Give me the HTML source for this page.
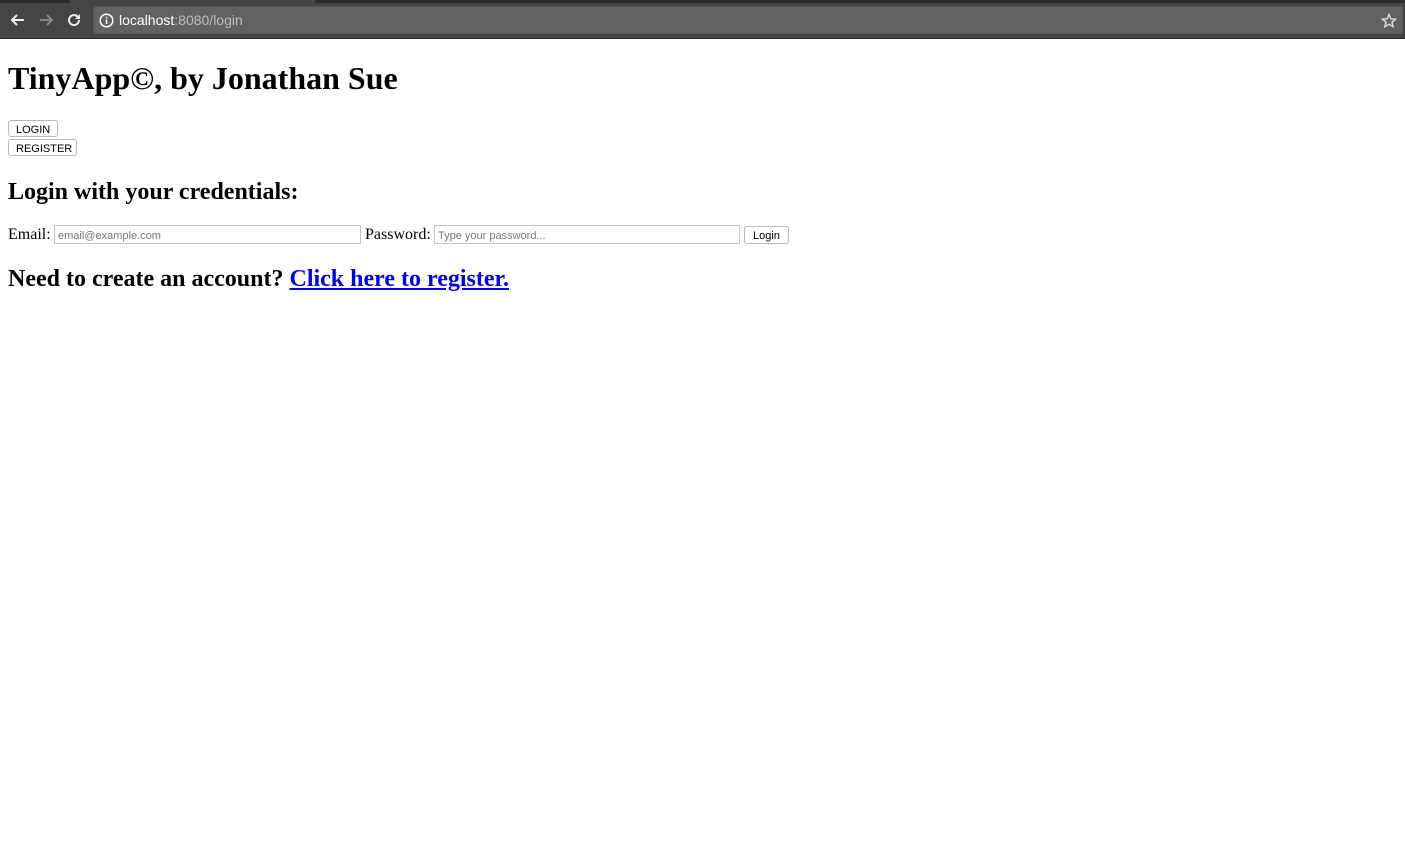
<!DOCTYPE html>
<html><head><style>
*{box-sizing:border-box}
body{margin:0;width:1405px;height:865px;background:#fff;font-family:"Liberation Serif",serif;position:relative;overflow:hidden}
.chrome{position:absolute;left:0;top:0;width:1405px;height:39px;background:#454545;border-bottom:1px solid #2a2a2a}
.topline{position:absolute;left:0;top:0;width:1405px;height:3px;background:#2b2b2b}
.tab{position:absolute;left:70px;top:0;width:245px;height:3px;background:#454545}
.url{position:absolute;left:93px;top:6px;width:1310px;height:28px;background:#626262;border-radius:3px;border:1px solid #555}
.url span{position:absolute;left:25px;top:5px;font:14px "Liberation Sans",sans-serif;color:#fff}
.url span i{font-style:normal;color:#bcbcbc}
.abs{position:absolute}
h1{position:absolute;left:8px;top:60px;margin:0;font-size:32px;font-weight:bold;line-height:37px}
h2{position:absolute;left:8px;margin:0;font-weight:bold}
.btn{position:absolute;left:8px;height:17px;border:1px solid #b8b8b8;border-radius:3px;background:#fff;font:11px "Liberation Sans",sans-serif;padding:3px 7px 0;line-height:13px}
.inp{position:absolute;height:19px;border:1px solid #c4c4c4;font:11px "Liberation Sans",sans-serif;color:#777;padding:4px 3px 0;line-height:12px}
.lbl{position:absolute;font-size:16px;top:226px}
a{color:#00e}
</style></head><body>
<div class="chrome"><div class="topline"></div><div class="tab"></div>
<svg class="abs" style="left:9px;top:11px" width="18" height="18" viewBox="0 0 18 18"><path d="M15 9H3M8 4L3 9l5 5" stroke="#eee" stroke-width="2" fill="none"/></svg>
<svg class="abs" style="left:37px;top:11px" width="18" height="18" viewBox="0 0 18 18"><path d="M3 9h12M10 4l5 5-5 5" stroke="#888" stroke-width="2" fill="none"/></svg>
<svg class="abs" style="left:65px;top:11px" width="18" height="18" viewBox="0 0 18 18"><path d="M14 9a5 5 0 1 1-1.5-3.5" stroke="#eee" stroke-width="2" fill="none"/><path d="M15 3v5h-5z" fill="#eee"/></svg>
<div class="url">
<svg class="abs" style="left:5px;top:6px" width="15" height="15" viewBox="0 0 15 15"><circle cx="7.5" cy="7.5" r="6.3" stroke="#fff" stroke-width="1.5" fill="none"/><rect x="6.8" y="6.5" width="1.5" height="4.5" fill="#fff"/><rect x="6.8" y="3.8" width="1.5" height="1.5" fill="#fff"/></svg>
<span>localhost<i>:8080/login</i></span>
<svg class="abs" style="left:1287px;top:6px" width="16" height="16" viewBox="0 0 16 16"><path d="M8 1.5l1.9 4.3 4.6.4-3.5 3 1.1 4.5L8 11.3 3.9 13.7 5 9.2l-3.5-3 4.6-.4z" stroke="#ddd" stroke-width="1.4" fill="none"/></svg>
</div></div>
<h1>TinyApp©, by Jonathan Sue</h1>
<div class="btn" style="top:120px">LOGIN</div>
<div class="btn" style="top:139px;width:69px;padding-left:7px;padding-right:0">REGISTER</div>
<h2 style="top:179px;font-size:24px">Login with your credentials:</h2>
<div class="lbl" style="left:8px">Email:</div>
<div class="inp" style="left:54px;top:225px;width:307px">email@example.com</div>
<div class="lbl" style="left:365px">Password:</div>
<div class="inp" style="left:434px;top:225px;width:306px">Type your password...</div>
<div class="btn" style="left:744px;top:226px;height:18px;padding:3px 8px 0">Login</div>
<h2 style="top:266px;font-size:24px">Need to create an account? <a href="#">Click here to register.</a></h2>
</body></html>
